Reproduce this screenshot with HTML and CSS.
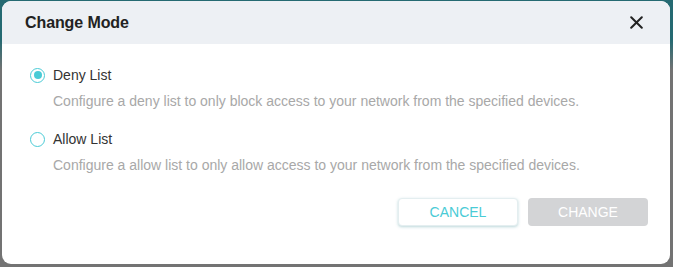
FILE: index.html
```html
<!DOCTYPE html>
<html>
<head>
<meta charset="utf-8">
<link rel="stylesheet" href="styles.css">
</head>
<body>
<div class="backdrop">
  <div class="dialog">
    <div class="dialog-header">
      <h2 class="dialog-title">Change Mode</h2>
      <button class="close-btn" aria-label="Close">
        <svg width="13" height="13" viewBox="0 0 13 13"><path d="M1.2 1.2 L11.8 11.8 M11.8 1.2 L1.2 11.8" stroke="#222" stroke-width="2" stroke-linecap="round"/></svg>
      </button>
    </div>
    <div class="dialog-body">
      <div class="option">
        <label class="radio-row"><span class="radio checked"></span><span class="radio-label">Deny List</span></label>
        <p class="option-desc">Configure a deny list to only block access to your network from the specified devices.</p>
      </div>
      <div class="option">
        <label class="radio-row"><span class="radio"></span><span class="radio-label">Allow List</span></label>
        <p class="option-desc">Configure a allow list to only allow access to your network from the specified devices.</p>
      </div>
    </div>
    <div class="dialog-footer">
      <button class="btn btn-cancel">CANCEL</button>
      <button class="btn btn-change">CHANGE</button>
    </div>
  </div>
</div>
</body>
</html>
```

FILE: styles.css
```css
html, body {
  margin: 0;
  padding: 0;
}
body {
  width: 673px;
  height: 267px;
  overflow: hidden;
  font-family: "Liberation Sans", Arial, sans-serif;
  background: linear-gradient(to bottom, #256a72 0px, #256a72 40px, #737373 70px, #737373 100%);
}
.backdrop {
  padding: 1px 3px 0 2px;
}
.dialog {
  width: 668px;
  height: 263px;
  background: #fff;
  border-radius: 9px;
  overflow: hidden;
  display: flex;
  flex-direction: column;
}
.dialog-header {
  height: 43px;
  background: #edf0f4;
  display: flex;
  align-items: center;
  justify-content: space-between;
  padding: 0 27px 0 23px;
  flex-shrink: 0;
}
.dialog-title {
  margin: 0;
  font-size: 16px;
  font-weight: bold;
  color: #222;
  letter-spacing: -0.1px;
}
.close-btn {
  border: 0;
  background: none;
  padding: 0;
  width: 13px;
  height: 13px;
  display: flex;
  margin-top: 0;
}
.dialog-body {
  padding: 23px 20px 0 28px;
  display: flex;
  flex-direction: column;
  gap: 22px;
}
.radio-row {
  display: flex;
  align-items: center;
  gap: 8px;
  height: 16px;
}
.radio {
  width: 15px;
  height: 15px;
  box-sizing: border-box;
  border: 1.5px solid #4acbd6;
  border-radius: 50%;
  display: flex;
  align-items: center;
  justify-content: center;
  background: #fff;
}
.radio.checked::after {
  content: "";
  width: 8px;
  height: 8px;
  border-radius: 50%;
  background: #4acbd6;
}
.radio-label {
  font-size: 14px;
  color: #333;
}
.option-desc {
  margin: 10px 0 0 23px;
  font-size: 14px;
  color: #a8a8a8;
  line-height: 16px;
}
.dialog-footer {
  display: flex;
  justify-content: flex-end;
  gap: 10px;
  padding: 25px 22px 0 0;
}
.btn {
  width: 120px;
  height: 28px;
  border-radius: 4px;
  font-family: "Liberation Sans", Arial, sans-serif;
  font-size: 14px;
  padding: 0;
}
.btn-cancel {
  background: #fff;
  color: #4acbd6;
  border: 1px solid #e4eef0;
  box-shadow: 0 1px 3px rgba(60, 140, 150, 0.35);
}
.btn-change {
  background: #d3d4d6;
  color: #fff;
  border: 0;
}
```
